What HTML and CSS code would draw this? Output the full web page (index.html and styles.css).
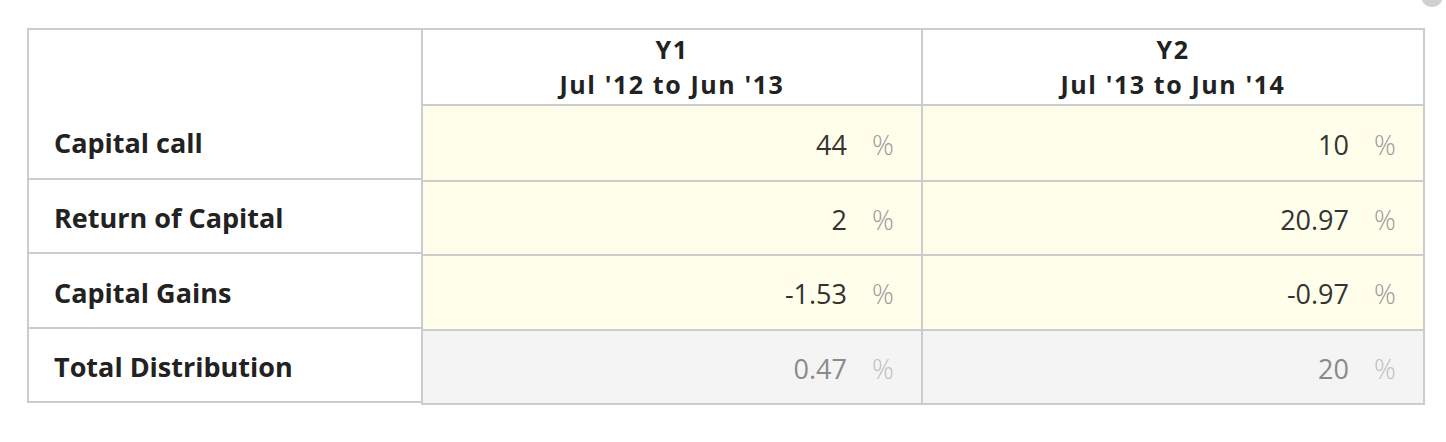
FILE: index.html
```html
<!DOCTYPE html>
<html lang="en">
<head>
    <meta charset="UTF-8">
    <meta name="viewport" content="width=device-width, initial-scale=1.0">
    <title>Distribution schedule</title>
    <link rel="stylesheet" href="styles.css">
</head>
<body>
    <div class="topbar">
        <span class="help"></span>
    </div>

    <div id="schedule">
        <div class="labels">
            <div class="cell head"></div>
            <div class="cell">Capital call</div>
            <div class="cell">Return of Capital</div>
            <div class="cell">Capital Gains</div>
            <div class="cell">Total Distribution</div>
        </div>

        <div class="data">
            <div class="cell head">Y1<br>Jul '12 to Jun '13</div>
            <div class="cell head">Y2<br>Jul '13 to Jun '14</div>

            <div class="cell"><span class="num">44</span><span class="pct">%</span></div>
            <div class="cell"><span class="num">10</span><span class="pct">%</span></div>

            <div class="cell"><span class="num">2</span><span class="pct">%</span></div>
            <div class="cell"><span class="num">20.97</span><span class="pct">%</span></div>

            <div class="cell"><span class="num">-1.53</span><span class="pct">%</span></div>
            <div class="cell"><span class="num">-0.97</span><span class="pct">%</span></div>

            <div class="cell total"><span class="num">0.47</span><span class="pct">%</span></div>
            <div class="cell total"><span class="num">20</span><span class="pct">%</span></div>
        </div>
    </div>
</body>
</html>
```

FILE: styles.css
```css
body {
    margin: 0;
    background: #fff;
    font-family: "Open Sans", "Noto Sans", sans-serif;
    color: #222;
}
.topbar {
    height: 28px;
    display: flex;
    justify-content: flex-end;
}
.help {
    width: 22px;
    height: 22px;
    margin: -15px 3px 0 0;
    border-radius: 50%;
    background: #d0d0d0;
}

#schedule {
    display: flex;
    align-items: flex-start;
    padding-left: 27px;
}

/* fixed label column */
.labels {
    width: 396px;
    box-sizing: border-box;
    display: grid;
    grid-template-rows: 74px 76px 74px 75px 74px;
    border: 2px solid #ccc;
    border-bottom: 0;
}
.labels .cell {
    display: flex;
    align-items: center;
    padding: 3px 0 0 25px;
    border-bottom: 2px solid #ccc;
    font-size: 27px;
    font-weight: 700;
    color: #222;
}
.labels .head {
    border-bottom: 0;
}

/* year columns */
.data {
    margin-left: -2px;
    display: grid;
    grid-template-columns: 500px 502px;
    grid-template-rows: 76px 76px 74px 75px 74px;
    border-top: 2px solid #ccc;
    border-left: 2px solid #ccc;
}
.data .cell {
    display: flex;
    align-items: center;
    justify-content: flex-end;
    padding: 2px 27px 0 0;
    border-right: 2px solid #ccc;
    border-bottom: 2px solid #ccc;
    background: #fefeeb;
    font-size: 27px;
    color: #333;
}
.data .head {
    justify-content: center;
    padding: 0;
    background: #fff;
    text-align: center;
    font-size: 25px;
    font-weight: 700;
    line-height: 35px;
    letter-spacing: 1.6px;
    color: #222;
}
.pct {
    width: 22px;
    margin-left: 25px;
    font-weight: 300;
    color: #9a9a9a;
}
.data .total {
    background: #f4f4f4;
    color: #8a8a8a;
}
.total .pct {
    color: #c0c0c0;
}
```
